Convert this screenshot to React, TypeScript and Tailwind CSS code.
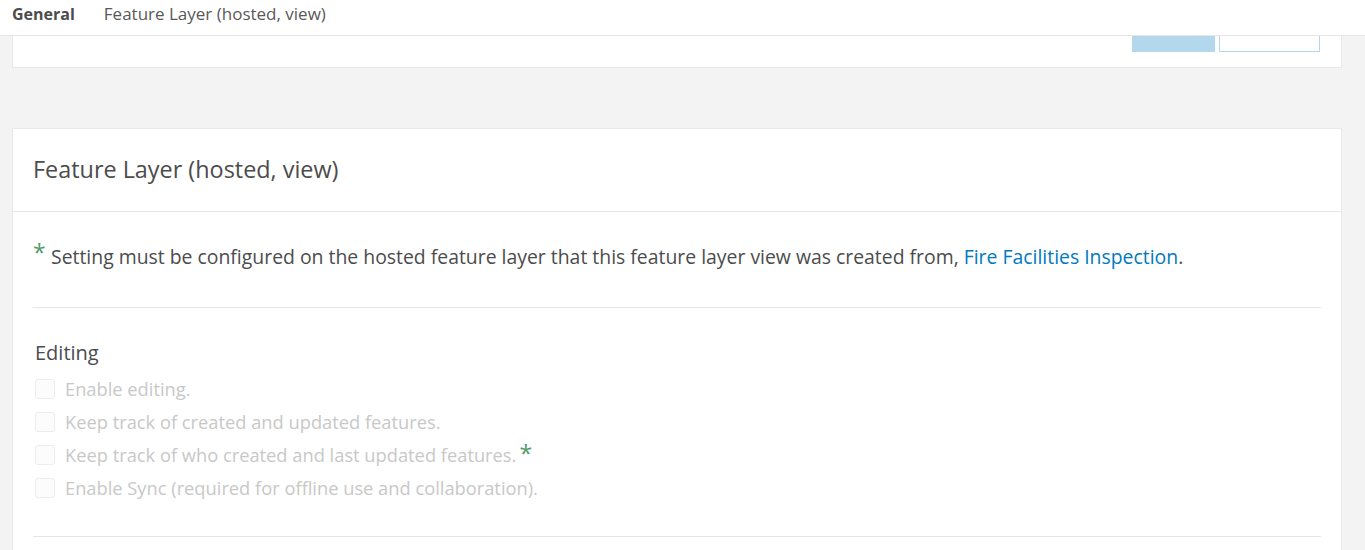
import React from 'react';

const options = [
    { label: 'Enable editing.', star: false },
    { label: 'Keep track of created and updated features.', star: false },
    { label: 'Keep track of who created and last updated features.', star: true },
    { label: 'Enable Sync (required for offline use and collaboration).', star: false },
];

const Star = ({ className }: { className?: string }) => (
    <span className={`text-[#52996b] leading-none relative ${className ?? ''}`}>*</span>
);

export default function App() {
    return (
        <div className="w-[1365px] h-[550px] overflow-hidden bg-[#f3f3f3] font-['Open_Sans',sans-serif]">
            {/* top tab strip */}
            <div className="h-[36px] pb-[8px] bg-white border-b border-[#e6e6e6] flex items-center gap-[29px] px-3">
                <span className="text-[16px] font-bold text-[#4c4c4c]">General</span>
                <span className="text-[17px] text-[#595959]">Feature Layer (hosted, view)</span>
            </div>

            <div className="pl-3 pr-[23px]">
                {/* sticky action bar */}
                <div className="h-[32px] bg-white border border-t-0 border-[#e8e8e8] flex justify-end gap-1 pr-[21px]">
                    <div className="w-[83px] h-[16px] bg-[#b3d8ed]" />
                    <div className="w-[101px] h-[16px] border border-t-0 border-[#b3d8ed] bg-white" />
                </div>

                {/* settings card */}
                <div className="mt-[60px] h-[500px] bg-white border border-[#e8e8e8]">
                    <div className="h-[83px] border-b border-[#e6e6e6] flex items-center px-5">
                        <h2 className="text-[23.4px] text-[#4c4c4c] font-normal">Feature Layer (hosted, view)</h2>
                    </div>
                    <div className="px-5">
                        <div className="pt-[32px] pb-[37px] border-b border-[#e6e6e6] text-[19.4px] leading-[26px] text-[#4c4c4c] flex items-baseline">
                            <Star className="text-[23px] w-[18px] shrink-0 -top-[3px]" />
                            <p>
                                Setting must be configured on the hosted feature layer that this feature layer view was created from,{' '}
                                <a className="text-[#0079c1]">Fire Facilities Inspection</a>.
                            </p>
                        </div>
                        <div className="pt-[32px] pb-[32px] border-b border-[#e6e6e6]">
                            <h3 className="text-[20px] text-[#4c4c4c] px-[2px] leading-[26px]">Editing</h3>
                            <div className="flex flex-col mt-[6px]">
                                {options.map((o) => (
                                    <label key={o.label} className="flex items-center gap-[10px] h-[33px] text-[18.3px] text-[#c8c8c8]">
                                        <span className="w-[20px] h-[20px] rounded-[3px] border border-[#ececec] bg-[#fcfcfc] ml-[2px]" />
                                        <span>{o.label}</span>
                                        {o.star && <Star className="text-[23px] -ml-[7px] -top-[1px]" />}
                                    </label>
                                ))}
                            </div>
                        </div>
                    </div>
                </div>
            </div>
        </div>
    );
}
